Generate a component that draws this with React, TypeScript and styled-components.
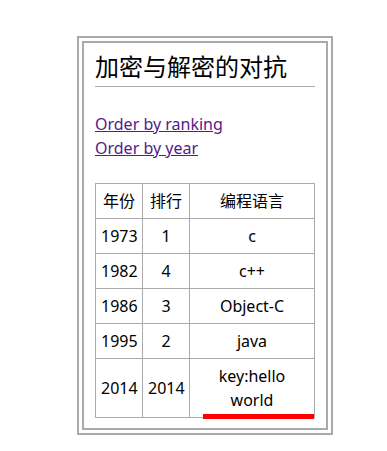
import styled, { createGlobalStyle } from "styled-components";

const GlobalStyle = createGlobalStyle`
  body {
    margin: 0;
    background: #ffffff;
    color: #000000;
    font-family: "Noto Sans", "Noto Sans CJK SC", sans-serif;
    font-size: 16px;
    line-height: 24px;
  }
`;

const languages = [
  { year: "1973", rank: "1", name: "c" },
  { year: "1982", rank: "4", name: "c++" },
  { year: "1986", rank: "3", name: "Object-C" },
  { year: "1995", rank: "2", name: "java" },
  { year: "2014", rank: "2014", name: "key:hello\nworld", marked: true },
];

const App = () => {
  return (
    <>
      <GlobalStyle />
      <Frame>
        <Article>
          <Title>加密与解密的对抗</Title>
          <LinkList>
            <OrderLink href="#ranking">Order by ranking</OrderLink>
            <OrderLink href="#year">Order by year</OrderLink>
          </LinkList>
          <Table>
            <colgroup>
              <col style={{ width: 47 }} />
              <col style={{ width: 47 }} />
              <col />
            </colgroup>
            <thead>
              <tr>
                <HeadCell>年份</HeadCell>
                <HeadCell>排行</HeadCell>
                <HeadCell>编程语言</HeadCell>
              </tr>
            </thead>
            <tbody>
              {languages.map((lang) => (
                <tr key={lang.year + lang.name}>
                  <Cell>{lang.year}</Cell>
                  <Cell>{lang.rank}</Cell>
                  <Cell $marked={lang.marked}>{lang.name}</Cell>
                </tr>
              ))}
            </tbody>
          </Table>
        </Article>
      </Frame>
    </>
  );
};

const Frame = styled.div`
  width: 246px;
  margin: 36px 0 0 77px;
  padding: 3px;
  border: 2px solid #aaaaaa;
`;

const Article = styled.div`
  border: 2px solid #aaaaaa;
  padding: 6px 11px 10px 11px;
`;

const Title = styled.h2`
  margin: 0;
  padding-bottom: 1px;
  font-size: 24px;
  font-weight: 400;
  line-height: 36px;
  border-bottom: 1px solid #aaaaaa;
`;

const LinkList = styled.div`
  display: flex;
  flex-direction: column;
  align-items: flex-start;
  margin: 25px 0 23px 0;
`;

const OrderLink = styled.a`
  color: #551a8b;
  text-decoration: underline;
`;

const Table = styled.table`
  width: 220px;
  table-layout: fixed;
  border-collapse: collapse;
`;

const HeadCell = styled.th`
  padding: 5px;
  font-weight: 400;
  text-align: center;
  border: 1px solid #aaaaaa;
`;

const Cell = styled.td<{ $marked?: boolean }>`
  position: relative;
  padding: 5px;
  text-align: center;
  white-space: pre-line;
  border: 1px solid #aaaaaa;

  &::after {
    content: "";
    display: ${(p) => (p.$marked ? "block" : "none")};
    position: absolute;
    left: 13px;
    right: 0;
    bottom: -2px;
    height: 5px;
    background: #ff0000;
  }
`;

export default App;
